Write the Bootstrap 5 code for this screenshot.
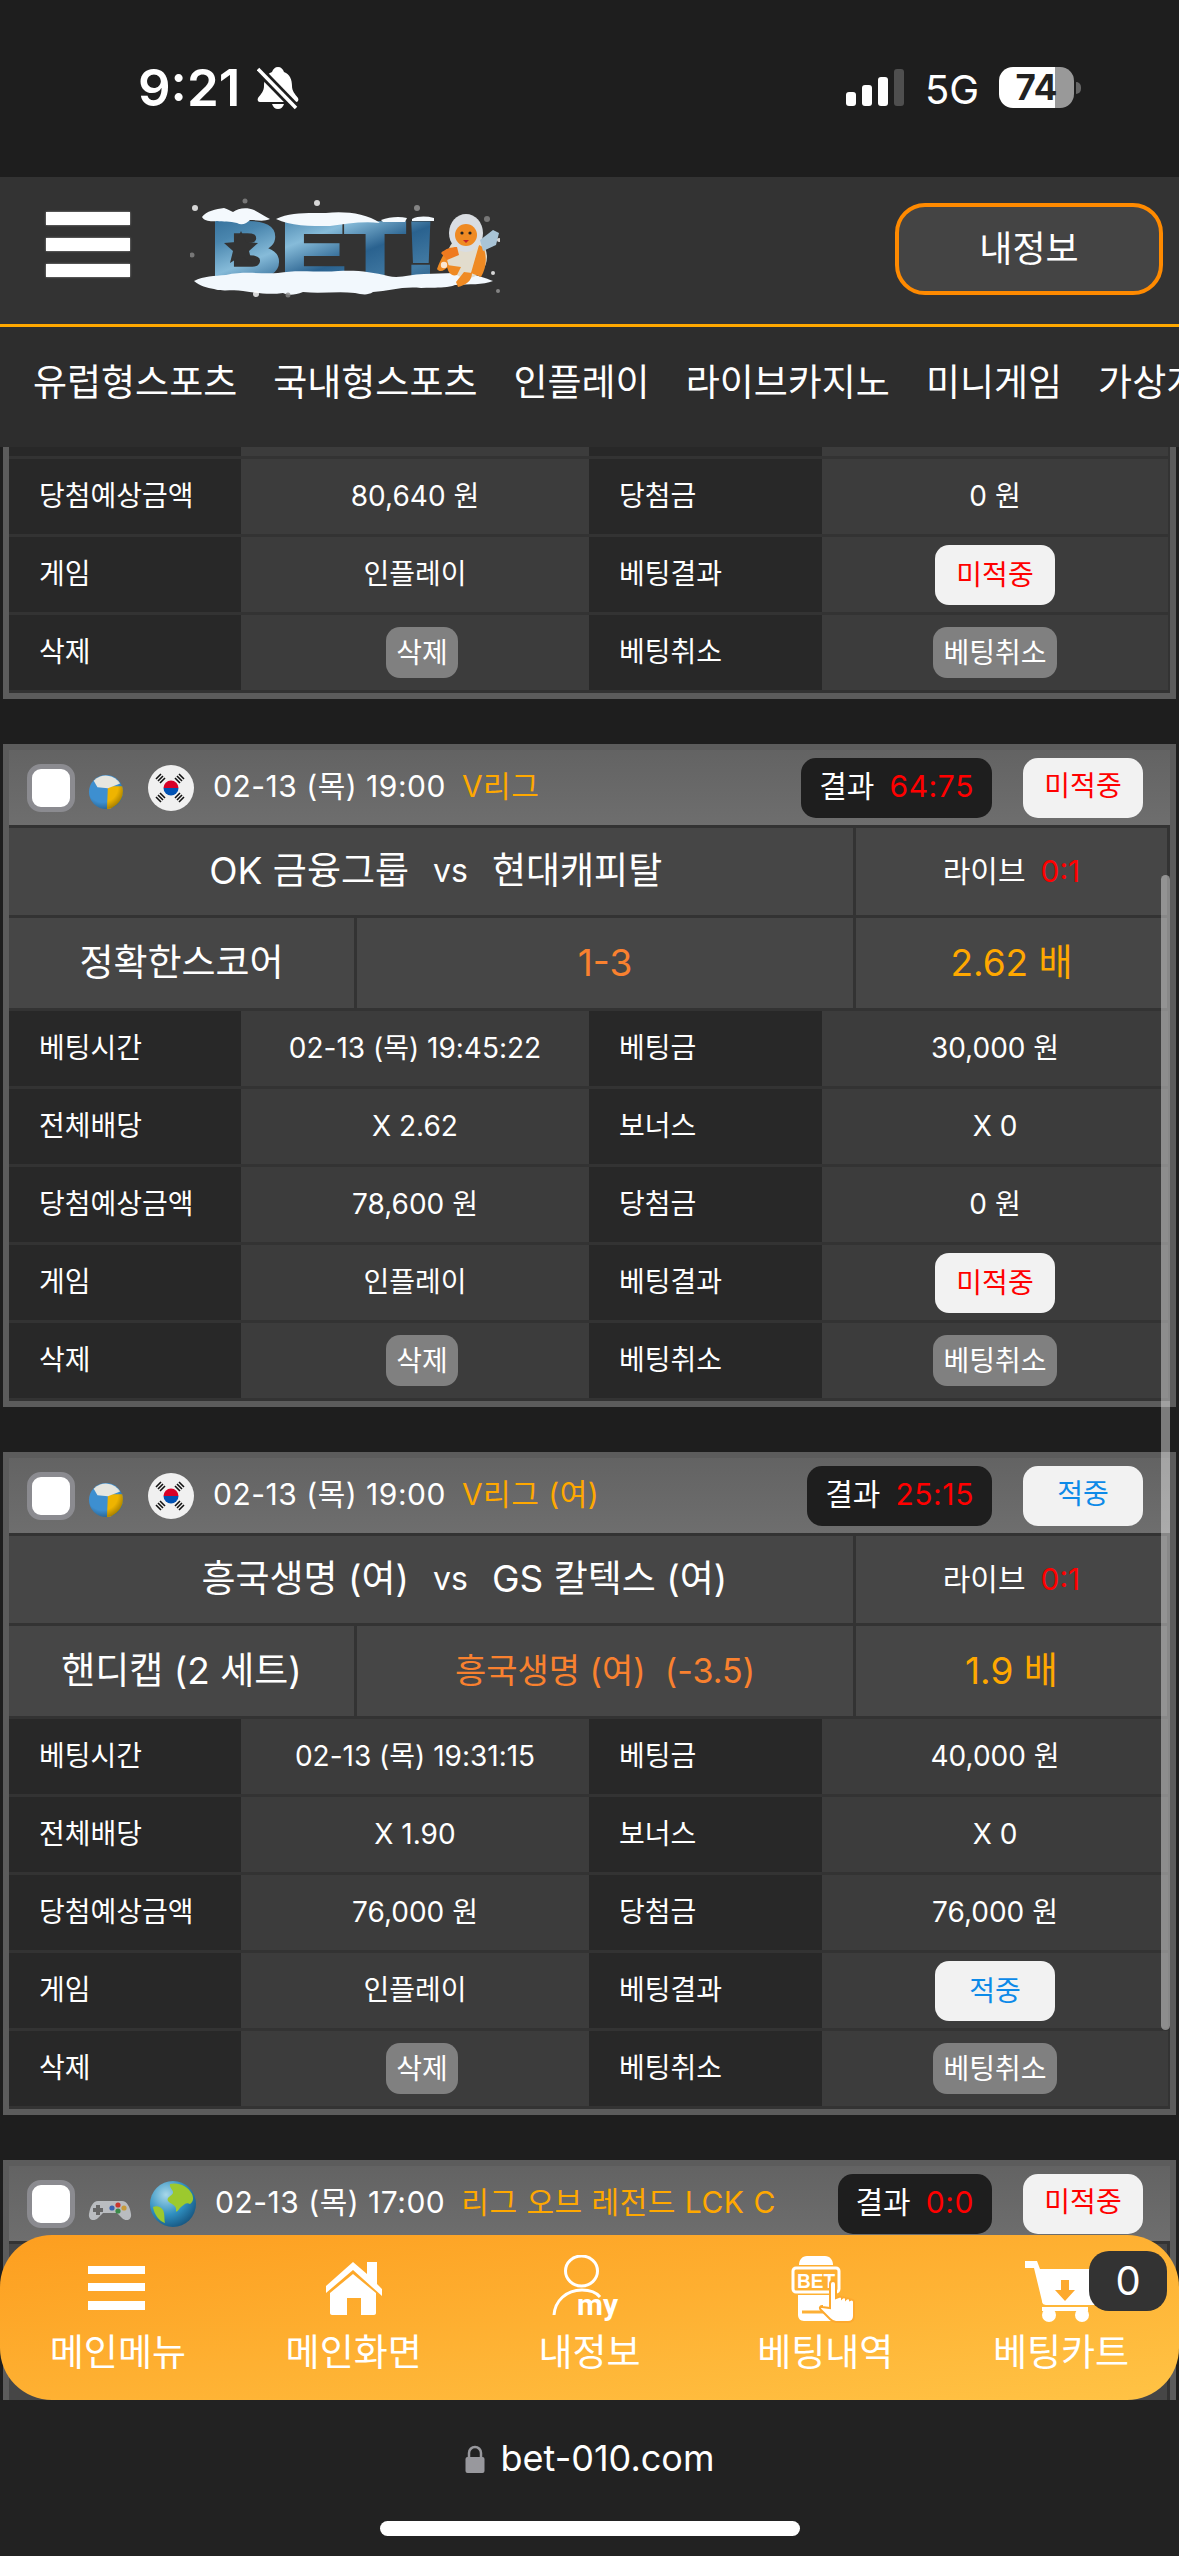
<!DOCTYPE html>
<html lang="ko">
<head>
<meta charset="utf-8">
<title>BET</title>
<link href="https://cdn.jsdelivr.net/npm/bootstrap@5.3.0/dist/css/bootstrap.min.css" rel="stylesheet">
<style>
html,body{margin:0;background:#1e1e1e}
body{width:1179px;height:2556px;overflow:hidden;font-family:Inter,"Noto Sans CJK KR",sans-serif;color:#fff;font-size:28px;line-height:1.2}
.phone{width:1179px;height:2556px}
.statusbar{height:177px;background:#1e1e1e;padding:0 98px 0 138px;position:relative}
.clock{font-size:51px;font-weight:600;line-height:1;margin-top:62px}
.bell{margin-left:17px;margin-top:66px}
.signal{width:58px;height:37px;gap:6px;margin-top:69px;margin-left:auto}
.signal i{display:block;width:10px;background:#fff;border-radius:3px}
.signal i:nth-child(1){height:14px}.signal i:nth-child(2){height:21px}.signal i:nth-child(3){height:29px}.signal i:nth-child(4){height:37px;background:#4f4f4f}
.net{font-size:40px;margin-left:21px;margin-top:66px;line-height:1.2;width:53px}
.batt{margin-left:21px;margin-top:67px;width:75px;height:41px;border-radius:14px;background:linear-gradient(90deg,#fff 75%,#999 75%);color:#222;font-weight:700;font-size:35px;line-height:41px;text-align:center}
.batt-tip{width:5px;height:12px;background:#666;border-radius:0 6px 6px 0;margin:82px 0 0 2px}
.topbar{height:150px;background:#333;border-bottom:3px solid #ffa800}
.burger{width:84px;gap:13px;margin-left:46px;margin-top:-12px}
.burger i{display:block;height:13px;background:#fff;box-shadow:0 0 2px #999}
.logo{margin-left:60px;margin-top:-2px}
.mybtn{margin-left:auto;margin-right:16px;width:268px;height:92px;border:4.5px solid #ff8a00;border-radius:30px;background:#444;color:#fff;font-size:36px;padding:0;margin-top:-4px}
.mybtn:hover{background:#444;color:#fff;border-color:#ff8a00}
.menu-row{height:120px;background:#2d2d2d;padding:0 0 8px 33px;gap:36px;white-space:nowrap;overflow:hidden;font-size:37px}
.scroller{height:1953px;padding:0 3px;overflow:hidden;position:relative;background:#1e1e1e}
.slip{background:#5c5c5c;padding:6px 6px 6px;margin-bottom:45px}
.slip-cut{padding-top:0}
.slip-head{height:75px;background:linear-gradient(#636363,#6e6e6e);padding:0 27px 0 18px}
.chk{width:48px;height:48px;border-radius:14px;background:#fff;border:5px solid #8b8b90;flex:none}
.ico-ball{margin-left:13px;margin-top:8px}
.flag{margin-left:24px}
.when{font-size:30px;margin-left:19px;white-space:nowrap;letter-spacing:.5px;padding-bottom:4px}
.lg{font-size:30px;color:#ffa800;margin-left:16px;white-space:nowrap;letter-spacing:.5px;padding-bottom:4px}
.score{margin-left:auto;height:60px;border-radius:15px;background:#1e1e1e;padding:0 18px 4px;font-size:30px;gap:15px;white-space:nowrap}
.score .red{letter-spacing:.6px}
.red{color:#f00}
.hit{margin-left:31px;width:120px;height:60px;border-radius:15px;background:#f2f2f2;font-size:28px;padding:0 0 4px;border:0;flex:none}
.hit.no,.tbl-hit.no{color:#f00}
.hit.ok,.tbl-hit.ok{color:#0d8ae8}
.hit:hover{background:#f2f2f2}
.match{background:#333;padding:3px 3px 0 0;gap:3px}
.m-row{display:grid;gap:3px}
.m1{grid-template-columns:844px 311px;height:87px}
.m2{grid-template-columns:345px 496px 311px;height:90px}
.m-row>div{background:#464646}
.m-big{font-size:37px}
.m-mid{font-size:30px;gap:15px;padding-bottom:2px}
.team-a{width:400px;text-align:right;white-space:nowrap}
.team-b{width:361px;white-space:nowrap}
.vs{width:83px;text-align:center;font-size:32px}
.pick{color:#f9812f}
.pick-s{font-size:34px}
.odd{color:#ffa800}
.tbl{display:grid;grid-template-columns:232px 348px 233px 346px;background:#333;row-gap:3px;padding:3px 2px 3px 0}
.tbl-first{padding-top:0}
.tbl>div{height:75px;display:flex;align-items:center}
.tbl>.cut{height:9px}
.lb{background:#282828;padding-left:30px}
.vl{background:#3c3c3c;justify-content:center}
.del{height:51px;padding:0 10px;border-radius:14px;background:#808080;color:#fff;border:0;font-size:28px;line-height:1}
.del:hover{background:#808080;color:#fff}
.del-a{margin-left:14px}
.tbl-hit{width:120px;height:60px;border-radius:14px;background:#f2f2f2;border:0;padding:0;font-size:28px}
.tbl-hit:hover{background:#f2f2f2}
.scrollthumb{position:absolute;left:1161px;top:428px;width:9px;height:1155px;border-radius:5px;background:rgba(255,255,255,.42)}
.dock{position:absolute;left:0;right:0;bottom:0;height:165px;border-radius:52px;background:linear-gradient(172deg,#fd9e1f,#ffc345);padding-top:20px}
.dock-item{width:236px;font-size:37px;color:#fff}
.dock-item span{margin-top:12px;line-height:36px;white-space:nowrap}
.cart-badge{position:absolute;left:1089px;top:16px;width:78px;height:60px;border-radius:20px;background:#333;font-size:40px;line-height:60px;text-align:center}
.urlbar{height:156px;background:#222;position:relative}
.addr{font-size:36px;gap:16px;padding-top:37px;line-height:1.2}
.homebar{width:420px;height:15px;border-radius:8px;background:#fff;margin:41px auto 0}
</style>
</head>
<body>
<div class="phone">
  <div class="statusbar d-flex align-items-start">
    <div class="clock">9:21</div>
    <svg class="bell" width="42" height="44" viewBox="0 0 42 44"><path d="M21 1c3 0 5 2 6 5 6 2 8 8 8 14 0 5 3 8 6 12 1 2 0 4-2 4H3c-2 0-3-2-2-4 3-4 6-7 6-12 0-6 2-12 8-14 1-3 3-5 6-5z" fill="#fff"/><path d="M15 38h12c-1 3-3 5-6 5s-5-2-6-5z" fill="#fff"/><path d="M1 3l38 39" stroke="#1e1e1e" stroke-width="9"/><path d="M1 3l38 39" stroke="#fff" stroke-width="3.5"/></svg>
    <div class="signal d-flex align-items-end"><i></i><i></i><i></i><i></i></div>
    <div class="net">5G</div>
    <div class="batt">74</div>
    <div class="batt-tip"></div>
  </div>

  <div class="topbar d-flex align-items-center">
    <div class="burger d-flex flex-column"><i></i><i></i><i></i></div>
    <svg class="logo" width="310" height="110" viewBox="-5 0 310 110">
      <defs>
        <linearGradient id="ice" x1="0" y1="0" x2="1" y2="1"><stop offset="0" stop-color="#2a6591"/><stop offset=".22" stop-color="#4a86ae"/><stop offset=".4" stop-color="#86bbd9"/><stop offset=".6" stop-color="#2a628f"/><stop offset=".8" stop-color="#427aa3"/><stop offset="1" stop-color="#1d4f7d"/></linearGradient>
      </defs>
      <text x="16" y="82" font-family="Liberation Sans" font-weight="700" font-size="78" textLength="226" lengthAdjust="spacingAndGlyphs" fill="url(#ice)" stroke="url(#ice)" stroke-width="4">BET!</text>
      <path d="M46 36l5 11 12 1-9 8 3 12-11-7-11 7 3-12-9-8 12-1z" fill="#333"/>
      <path d="M7 22c4-6 14-8 22-9 4 1 6 3 9 4 5-4 14-5 21-2 6 3 12 7 16 9-6 3-14 1-20 1-3 3-8 6-13 3-7-2-14-1-20-2-6 1-13 0-15-4zM81 24c14-7 32-6 50-6 18-2 40 0 54 10-18-2-34 1-50 3-20 0-40 0-54-7zM186 25c8-3 18-4 26-2l-2 4h-22zM217 24c6-3 14-3 22-1v3h-22z" fill="#f4f9fd"/>
      <path d="M-1 86c10-5 20-5 32-6 18-4 34-1 52-2 20-4 42 0 60-2 20-1 34 1 50 5 12 3 22-2 36-2 16 0 30-2 44 0 8 1 18 4 25 7-10 4-24 3-38 4-10 4-24 2-34 3-18-2-32 3-48 4-6 4-12 2-18 1-18-2-34 1-52-1-8 3-14 4-20 1-14 2-26 0-40-2-10-2-20 1-29-2-7-1-14-3-20-8z" fill="#f2f8fd"/>
      <g>
        <path d="M255 70c-6 6-10 8-13 4 2-6 6-14 10-20l8 4z" fill="#ef8a23"/>
        <ellipse cx="272" cy="62" rx="20" ry="21" fill="#e2dccd"/>
        <path d="M252 70c0 6 4 12 10 10l4-8zM277 78c0 8-6 12-14 14l-2-5 8-10zM288 52c4 8 4 20-2 30l-10-4 8-28z" fill="#ef8a23"/>
        <ellipse cx="271" cy="38" rx="17" ry="19" fill="#d9dde2"/>
        <ellipse cx="271" cy="40" rx="11" ry="11" fill="#ef8a23"/>
        <circle cx="267" cy="38" r="1.600" fill="#222"/><circle cx="275" cy="38" r="1.600" fill="#222"/>
        <path d="M268 45h6l-3 3z" fill="#c4242a"/>
        <path d="M285 45l13-10 6 3-3 12-13 6z" fill="#a9c4d6"/>
        <path d="M246 58c4-4 10-6 16-6l2 8-12 5z" fill="#ef7a1f"/>
      </g>
      <g fill="#fff" opacity=".8"><circle cx="0" cy="13" r="3"/><circle cx="122" cy="8" r="3"/><circle cx="222" cy="13" r="3" fill="#999"/><circle cx="50" cy="6" r="2.500" fill="#888"/><circle cx="93" cy="100" r="2.500" fill="#888"/><circle cx="61" cy="99" r="3"/><circle cx="-3" cy="60" r="2.500" fill="#888"/><circle cx="304" cy="45" r="2"/><circle cx="298" cy="78" r="2"/><circle cx="303" cy="96" r="2" fill="#999"/><circle cx="249" cy="70" r="3.200"/><circle cx="292" cy="24" r="3" fill="#888"/></g>
    </svg>
    <button type="button" class="btn mybtn">내정보</button>
  </div>

  <nav class="menu-row d-flex align-items-center">
    <span>유럽형스포츠</span><span>국내형스포츠</span><span>인플레이</span><span>라이브카지노</span><span>미니게임</span><span>가상게임</span>
  </nav>

  <main class="scroller">
    <section class="slip slip-cut">
      <div class="tbl tbl-first">
        <div class="lb cut"></div><div class="vl cut"></div><div class="lb cut"></div><div class="vl cut"></div>
        <div class="lb">당첨예상금액</div><div class="vl">80,640 원</div><div class="lb">당첨금</div><div class="vl">0 원</div>
        <div class="lb">게임</div><div class="vl">인플레이</div><div class="lb">베팅결과</div><div class="vl"><button type="button" class="btn tbl-hit no">미적중</button></div>
        <div class="lb">삭제</div><div class="vl"><button type="button" class="btn del del-a">삭제</button></div><div class="lb">베팅취소</div><div class="vl"><button type="button" class="btn del">베팅취소</button></div>
      </div>
    </section>

    <section class="slip">
      <header class="slip-head d-flex align-items-center">
        <span class="chk"></span>
        <svg class="ico-ball" width="36" height="36" viewBox="0 0 38 38"><use href="#ballsym"/></svg>
        <svg class="flag" width="46" height="46" viewBox="0 0 46 46"><use href="#krflag"/></svg>
        <span class="when">02-13 (목) 19:00</span><span class="lg">V리그</span>
        <span class="score d-flex align-items-center"><span>결과</span><span class="red">64:75</span></span>
        <button type="button" class="btn hit no">미적중</button>
      </header>
      <div class="match d-flex flex-column">
        <div class="m-row m1"><div class="m-big d-flex align-items-center"><span class="team-a">OK 금융그룹</span><span class="vs">vs</span><span class="team-b">현대캐피탈</span></div><div class="m-mid d-flex align-items-center justify-content-center"><span>라이브</span><span class="red">0:1</span></div></div>
        <div class="m-row m2"><div class="m-big d-flex align-items-center justify-content-center">정확한스코어</div><div class="m-big pick d-flex align-items-center justify-content-center">1-3</div><div class="m-big odd d-flex align-items-center justify-content-center">2.62 배</div></div>
      </div>
      <div class="tbl">
        <div class="lb">베팅시간</div><div class="vl">02-13 (목) 19:45:22</div><div class="lb">베팅금</div><div class="vl">30,000 원</div>
        <div class="lb">전체배당</div><div class="vl">X 2.62</div><div class="lb">보너스</div><div class="vl">X 0</div>
        <div class="lb">당첨예상금액</div><div class="vl">78,600 원</div><div class="lb">당첨금</div><div class="vl">0 원</div>
        <div class="lb">게임</div><div class="vl">인플레이</div><div class="lb">베팅결과</div><div class="vl"><button type="button" class="btn tbl-hit no">미적중</button></div>
        <div class="lb">삭제</div><div class="vl"><button type="button" class="btn del del-a">삭제</button></div><div class="lb">베팅취소</div><div class="vl"><button type="button" class="btn del">베팅취소</button></div>
      </div>
    </section>

    <section class="slip">
      <header class="slip-head d-flex align-items-center">
        <span class="chk"></span>
        <svg class="ico-ball" width="36" height="36" viewBox="0 0 38 38"><use href="#ballsym"/></svg>
        <svg class="flag" width="46" height="46" viewBox="0 0 46 46"><use href="#krflag"/></svg>
        <span class="when">02-13 (목) 19:00</span><span class="lg">V리그 (여)</span>
        <span class="score d-flex align-items-center"><span>결과</span><span class="red">25:15</span></span>
        <button type="button" class="btn hit ok">적중</button>
      </header>
      <div class="match d-flex flex-column">
        <div class="m-row m1"><div class="m-big d-flex align-items-center"><span class="team-a">흥국생명 (여)</span><span class="vs">vs</span><span class="team-b">GS 칼텍스 (여)</span></div><div class="m-mid d-flex align-items-center justify-content-center"><span>라이브</span><span class="red">0:1</span></div></div>
        <div class="m-row m2"><div class="m-big d-flex align-items-center justify-content-center">핸디캡 (2 세트)</div><div class="pick-s pick d-flex align-items-center justify-content-center">흥국생명 (여)&nbsp; (-3.5)</div><div class="m-big odd d-flex align-items-center justify-content-center">1.9 배</div></div>
      </div>
      <div class="tbl">
        <div class="lb">베팅시간</div><div class="vl">02-13 (목) 19:31:15</div><div class="lb">베팅금</div><div class="vl">40,000 원</div>
        <div class="lb">전체배당</div><div class="vl">X 1.90</div><div class="lb">보너스</div><div class="vl">X 0</div>
        <div class="lb">당첨예상금액</div><div class="vl">76,000 원</div><div class="lb">당첨금</div><div class="vl">76,000 원</div>
        <div class="lb">게임</div><div class="vl">인플레이</div><div class="lb">베팅결과</div><div class="vl"><button type="button" class="btn tbl-hit ok">적중</button></div>
        <div class="lb">삭제</div><div class="vl"><button type="button" class="btn del del-a">삭제</button></div><div class="lb">베팅취소</div><div class="vl"><button type="button" class="btn del">베팅취소</button></div>
      </div>
    </section>

    <section class="slip">
      <header class="slip-head d-flex align-items-center">
        <span class="chk"></span>
        <svg class="ico-ball" width="44" height="30" viewBox="0 0 44 30"><path d="M10 8h24c5 0 8 6 9 13 1 6-5 8-9 4l-5-5H15l-5 5c-4 4-10 2-9-4 1-7 4-13 9-13z" fill="#b9bcc0"/><path d="M8 12h4v3h3v4h-3v3H8v-3H5v-4h3z" fill="#666"/><circle cx="30" cy="12" r="2.600" fill="#c8352e"/><circle cx="36" cy="15" r="2.600" fill="#c79a3a"/><circle cx="30" cy="18" r="2.600" fill="#3b8a4a"/><circle cx="24" cy="15" r="2.600" fill="#3a62b0"/></svg>
        <svg class="flag" style="margin-left:18px" width="46" height="46" viewBox="0 0 46 46"><defs><radialGradient id="sea" cx=".35" cy=".3" r=".8"><stop offset="0" stop-color="#a8d8ea"/><stop offset=".55" stop-color="#2f8fc0"/><stop offset="1" stop-color="#134e78"/></radialGradient></defs><circle cx="23" cy="23" r="23" fill="url(#sea)"/><path d="M20 3c8-2 18 2 22 10 2 5 1 8-2 10-4-2-6 1-9 3-3 3-5 7-5 3 1-5-6-6-8-9-2-4 4-5 5-8 1-3-4-5-3-9zM3 26c4-2 8 0 10 3 2 4 1 9 2 13-6-2-11-9-12-16z" fill="#9cc92e"/></svg>
        <span class="when">02-13 (목) 17:00</span><span class="lg">리그 오브 레전드 LCK C</span>
        <span class="score d-flex align-items-center"><span>결과</span><span class="red">0:0</span></span>
        <button type="button" class="btn hit no">미적중</button>
      </header>
      <div class="match d-flex flex-column">
        <div class="m-row m1"><div></div><div></div></div>
        <div class="m-row m2"><div></div><div></div><div></div></div>
      </div>
    </section>

    <div class="scrollthumb"></div>

    <div class="dock d-flex">
      <div class="dock-item d-flex flex-column align-items-center">
        <svg width="90" height="68" viewBox="0 0 90 68"><path d="M15 11h57v8H15zM15 28h57v8H15zM15 46h57v9H15z" fill="#fff"/></svg>
        <span>메인메뉴</span>
      </div>
      <div class="dock-item d-flex flex-column align-items-center">
        <svg width="90" height="68" viewBox="0 0 90 68"><path d="M17 31L44 7l14 12V7h10v22l5 5v7L44 15 17 38z" fill="#fff"/><path d="M21 38L44 19l23 19v20c0 1-1 2-2 2H52V43H38v17H23c-1 0-2-1-2-2z" fill="#fff"/></svg>
        <span>메인화면</span>
      </div>
      <div class="dock-item d-flex flex-column align-items-center">
        <svg width="90" height="68" viewBox="0 0 90 68"><ellipse cx="37.500" cy="16" rx="16" ry="15" fill="none" stroke="#fff" stroke-width="3"/><path d="M10 60c1-14 12-25 28-25 8 0 14 2 18 7" fill="none" stroke="#fff" stroke-width="3"/><text x="33" y="60" font-family="Roboto" font-weight="700" font-size="30" fill="#fff">my</text></svg>
        <span>내정보</span>
      </div>
      <div class="dock-item d-flex flex-column align-items-center">
        <svg width="90" height="68" viewBox="0 0 90 68"><path d="M19 10c0-5 3-9 8-9h18c5 0 8 4 8 9z" fill="#fff"/><rect x="13" y="13" width="46" height="24" rx="3" fill="none" stroke="#fff" stroke-width="3"/><text x="17" y="33" font-family="Liberation Sans" font-weight="700" font-size="20" textLength="38" lengthAdjust="spacingAndGlyphs" fill="#fff">BET</text><path d="M18 40h38v26H24c-4 0-6-3-6-6z" fill="#fff"/><path d="M22 57h22" stroke="#fdb036" stroke-width="3"/><path d="M42 52l8 1V29c0-4 6-4 6 0v14l3-1c1-1 3 0 3 1 1-1 4-1 4 1 1-1 4-1 4 1 2-1 4 0 4 2v14c0 4-2 6-6 6H56c-3 0-4-1-6-3l-9-9c-2-2-1-4 1-4z" fill="#fff" stroke="#fda92e" stroke-width="2"/></svg>
        <span>베팅내역</span>
      </div>
      <div class="dock-item d-flex flex-column align-items-center">
        <svg width="90" height="68" viewBox="0 0 90 68"><path d="M9 6h12l3 8h66v36H31c-3 0-5-1-5-4l-8-33H9z" fill="#fff"/><circle cx="33" cy="60" r="7" fill="#fff"/><circle cx="66" cy="60" r="7" fill="#fff"/><path d="M26 52h46v4H26z" fill="#fff"/><path d="M45 25h8v10h6L49 46 39 35h6z" fill="#fda92e"/></svg>
        <span>베팅카트</span>
      </div>
      <div class="cart-badge">0</div>
    </div>
  </main>

  <footer class="urlbar">
    <div class="addr d-flex justify-content-center align-items-center">
      <svg width="20" height="28" viewBox="0 0 20 28"><path d="M4 13V8a6 6 0 0 1 12 0v5" fill="none" stroke="#98989d" stroke-width="2.500"/><rect x="0.500" y="12" width="19" height="16" rx="2" fill="#98989d"/></svg>
      <span>bet-010.com</span>
    </div>
    <div class="homebar"></div>
  </footer>
</div>

<svg width="0" height="0" class="position-absolute">
  <defs>
    <radialGradient id="ballshade" cx=".4" cy=".35" r=".75"><stop offset=".6" stop-color="#000" stop-opacity="0"/><stop offset="1" stop-color="#000" stop-opacity=".4"/></radialGradient>
    <symbol id="ballsym" viewBox="0 0 38 38"><circle cx="19" cy="19" r="18" fill="#3d8fd0"/><path d="M21 13L36 13a18 18 0 0 1-8 21c-3 2-5 3-8 3z" fill="#eeb400"/><path d="M6 7A18 18 0 0 1 34 10L21 15 10 14z" fill="#e6e6e0"/><circle cx="19" cy="19" r="18" fill="url(#ballshade)"/></symbol>
    <symbol id="krflag" viewBox="0 0 46 46"><circle cx="23" cy="23" r="23" fill="#f0f0f0"/><path d="M15.500 23a7.500 7.500 0 0 1 15 0z" fill="#d80027"/><path d="M15.500 23a7.500 7.500 0 0 0 15 0z" fill="#0052b4"/><g stroke="#111" stroke-width="1.600"><path d="M8 14l5-5M10 16l5-5M12 18l5-5"/><path d="M31 9l5 5M29 11l5 5M27 13l5 5"/><path d="M8 32l5 5M10 30l5 5M12 28l5 5"/><path d="M36 32l-5 5M34 30l-5 5M32 28l-5 5"/></g></symbol>
  </defs>
</svg>
<script src="https://cdn.jsdelivr.net/npm/bootstrap@5.3.0/dist/js/bootstrap.bundle.min.js"></script>
</body>
</html>
